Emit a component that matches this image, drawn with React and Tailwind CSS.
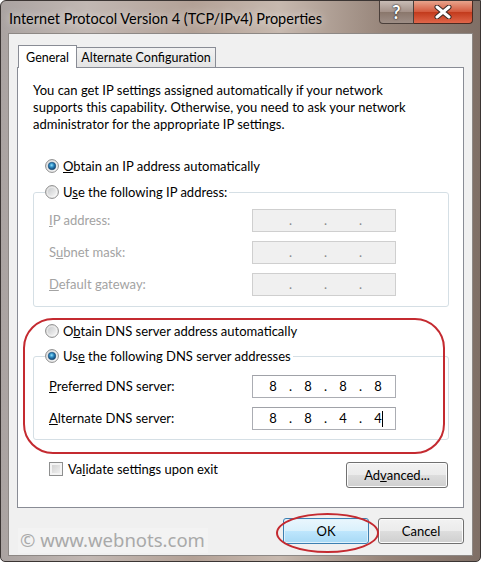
import React from "react";

const FONT = { fontFamily: '"Segoe UI", Lato, "Noto Sans", sans-serif' };

// Win7 style radio drawn as svg
const Radio = ({ checked }) => (
  <svg width="14" height="14" viewBox="0 0 14 14" className="shrink-0">
    <defs>
      <linearGradient id="rOuter" x1="0" y1="0" x2="1" y2="1">
        <stop offset="0" stopColor="#dcdcdc" />
        <stop offset="1" stopColor="#fbfbfb" />
      </linearGradient>
      <linearGradient id="rInner" x1="0" y1="0" x2="1" y2="1">
        <stop offset="0" stopColor="#c9cbcd" />
        <stop offset="1" stopColor="#f4f4f4" />
      </linearGradient>
      <radialGradient id="rDot" cx="0.45" cy="0.4" r="0.6">
        <stop offset="0" stopColor="#8fe2fb" />
        <stop offset="0.45" stopColor="#2f8ac2" />
        <stop offset="1" stopColor="#0c3b66" />
      </radialGradient>
    </defs>
    <circle cx="7" cy="7" r="6.4" fill="url(#rOuter)" stroke="#8b8b8b" strokeWidth="1" />
    {checked ? (
      <circle cx="7" cy="7" r="3.8" fill="url(#rDot)" stroke="#1b4f7a" strokeWidth="0.6" />
    ) : (
      <circle cx="7" cy="7" r="4" fill="url(#rInner)" />
    )}
  </svg>
);

const IpBox = ({ parts, disabled, cursor }) => (
  <div
    className={`relative flex h-[23px] w-[144px] items-center border pl-[3px] text-[13px] ${
      disabled ? "border-[#cfcfcf] bg-[#f0f0f0] text-[#8a8a8a]" : "border-[#abadb3] border-t-[#a0a2a8] bg-white text-black"
    }`}
  >
    {[0, 1, 2, 3].map((i) => (
      <React.Fragment key={i}>
        <span className="w-[34px] text-center">{parts ? parts[i] : ""}</span>
        {i < 3 && <span className="flex w-[1px] justify-center">.</span>}
      </React.Fragment>
    ))}
    {cursor && <span className="absolute left-[129px] top-[3px] h-[16px] w-[1px] bg-black" />}
  </div>
);

const Field = ({ label, disabled, parts, cursor, last }) => (
  <div className={`flex items-center ${last ? "" : "mb-[9px]"}`}>
    <span className={`ml-[4px] w-[203px] ${disabled ? "text-[#a3a3a3]" : "text-black"}`}>{label}</span>
    <IpBox parts={parts} disabled={disabled} cursor={cursor} />
  </div>
);

const WinButton = ({ children, focused, w = "w-[86px]" }) => (
  <button
    className={`${w} h-[26px] rounded-[3px] border text-[13px] text-black ${
      focused
        ? "border-[#3c7fb1] bg-[linear-gradient(#eaf6fd_0%,#d9f0fc_50%,#bee6fd_51%,#a7d9f5_100%)] shadow-[inset_0_0_0_1px_#dff2fc]"
        : "border-[#707070] bg-[linear-gradient(#f2f2f2_0%,#ebebeb_50%,#dddddd_51%,#cfcfcf_100%)] shadow-[inset_0_0_0_1px_#fcfcfc]"
    }`}
  >
    {children}
  </button>
);

export default function App() {
  return (
    <div
      className="relative h-[562px] w-[481px] overflow-hidden rounded-tl-[6px] rounded-b-[5px] border border-[#3b3533] bg-[linear-gradient(90deg,#aaa3a1_0%,#c2b8b3_18%,#b3a196_40%,#c7b9af_58%,#97857a_80%,#7f6f66_100%)]"
      style={FONT}
    >
      {/* title bar */}
      <div className="flex h-[32px] items-center justify-between">
        <span className="ml-[8px] mt-[3px] text-[14.5px] text-black [text-shadow:0_0_8px_rgba(255,255,255,0.8)]">
          Internet Protocol Version 4 (TCP/IPv4) Properties
        </span>
        <div className="mr-[7px] flex self-start">
          <div className="flex h-[23px] w-[35px] items-center justify-center rounded-bl-[4px] border border-t-0 border-[#4a3f3a] bg-[linear-gradient(#c8bcb5,#a39188_50%,#8a776c_51%,#9e8e86)]">
            <span className="text-[18px] font-bold leading-none text-white [text-shadow:0_0_2px_#222,0_0_1px_#222]">?</span>
          </div>
          <div className="flex h-[23px] w-[59px] items-center justify-center rounded-br-[4px] border border-l-0 border-t-0 border-[#4a2a22] bg-[linear-gradient(#e8a48c,#d4583c_50%,#c23a1c_51%,#e0664a)]">
            <svg width="18" height="14" viewBox="0 0 18 14">
              <path d="M3 2 L15 12 M15 2 L3 12" stroke="#3a2a26" strokeWidth="5" strokeLinecap="round" />
              <path d="M3 2 L15 12 M15 2 L3 12" stroke="#ffffff" strokeWidth="3" strokeLinecap="round" />
            </svg>
          </div>
        </div>
      </div>

      {/* client area */}
      <div className="mx-[7px] h-[523px] border border-[#8d8885] bg-[#f0f0f0] px-[8px] pt-[11px] text-[13px] leading-[17px] text-black">
        {/* tabs */}
        <div className="relative z-10 -mb-px flex items-end text-[12.5px]">
          <div className="ml-px flex h-[23px] w-[59px] items-center justify-center border border-b-0 border-[#898c95] bg-white">
            General
          </div>
          <div className="flex h-[21px] w-[139px] items-center justify-center border border-b-[#898c95] border-l-0 border-[#898c95] bg-[linear-gradient(#f2f2f2,#e4e4e4)]">
            Alternate Configuration
          </div>
        </div>

        {/* panel */}
        <div className="h-[441px] border border-[#898c95] bg-white pl-[15px] pr-[14px] pt-[14px]">
          <p>
            You can get IP settings assigned automatically if your network
            <br />
            supports this capability. Otherwise, you need to ask your network
            <br />
            administrator for the appropriate IP settings.
          </p>

          <div className="ml-[12px] mt-[23px] flex h-[20px] items-center gap-[4px]">
            <Radio checked />
            <span>
              <u>O</u>btain an IP address automatically
            </span>
          </div>

          <fieldset className="mt-[6px] w-[416px] rounded-[3px] border border-[#d5dfe5] pb-[10px] pl-[11px]">
            <legend className="flex h-[20px] items-center gap-[4px] bg-white pr-[2px]">
              <Radio />
              <span>
                U<u>s</u>e the following IP address:
              </span>
            </legend>
            <div className="pt-[7px]">
              <Field disabled label={<><u>I</u>P address:</>} />
              <Field disabled label={<>S<u>u</u>bnet mask:</>} />
              <Field disabled last label={<><u>D</u>efault gateway:</>} />
            </div>
          </fieldset>

          <div className="ml-[12px] mt-[14px] flex h-[20px] items-center gap-[4px]">
            <Radio />
            <span>
              O<u>b</u>tain DNS server address automatically
            </span>
          </div>

          <fieldset className="mt-[5px] w-[416px] rounded-[3px] border border-[#d5dfe5] pb-[9px] pl-[11px]">
            <legend className="flex h-[20px] items-center gap-[4px] bg-white pr-[2px]">
              <Radio checked />
              <span>
                Us<u>e</u> the following DNS server addresses
              </span>
            </legend>
            <div className="pt-[9px]">
              <Field label={<><u>P</u>referred DNS server:</>} parts={["8", "8", "8", "8"]} />
              <Field last cursor label={<><u>A</u>lternate DNS server:</>} parts={["8", "8", "4", "4"]} />
            </div>
          </fieldset>

          <div className="mt-[22px] flex items-start justify-between">
            <div className="ml-[16px] flex h-[14px] items-center gap-[5px]">
              <span className="h-[14px] w-[14px] border border-[#8e8f8f] bg-[linear-gradient(135deg,#cbcbcb,#f6f6f6)] shadow-[inset_0_0_0_2px_#f4f4f4]" />
              <span>
                Va<u>l</u>idate settings upon exit
              </span>
            </div>
            <div className="mr-px">
              <WinButton w="w-[102px]">
                Ad<u>v</u>anced...
              </WinButton>
            </div>
          </div>
        </div>

        {/* dialog buttons */}
        <div className="mt-[10px] flex justify-end gap-[9px]">
          <WinButton focused>OK</WinButton>
          <WinButton>Cancel</WinButton>
        </div>
      </div>

      {/* watermark */}
      <div
        className="absolute left-[17px] top-[527px] flex h-[25px] w-[190px] items-center whitespace-nowrap bg-[#f4f4f4]/80 pl-[2px] text-[18.5px] leading-none text-[#a9a9a9]"
        style={{ fontFamily: '"Noto Sans", sans-serif' }}
      >
        © www.webnots.com
      </div>

      {/* red highlight marks */}
      <div className="pointer-events-none absolute left-[22px] top-[317px] h-[136px] w-[422px] rounded-[30px] border-2 border-[#c42a30]" />
      <div className="pointer-events-none absolute left-[275px] top-[512px] h-[40px] w-[103px] rounded-[50%] border-2 border-[#c42a30]" />
    </div>
  );
}
